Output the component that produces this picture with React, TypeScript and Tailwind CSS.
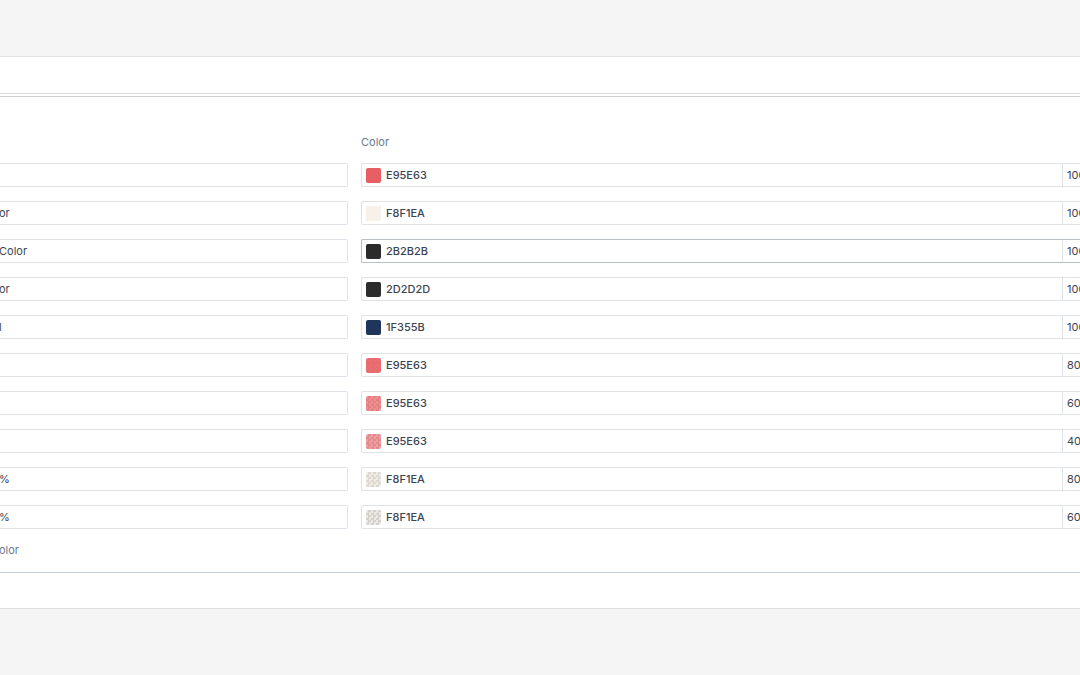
const rows: { label: string; hex: string; swatch: string; op: string; pct: string; focus?: boolean }[] = [
  { label: "", hex: "E95E63", swatch: "bg-[#E95E63]", op: "opacity-100", pct: "100%" },
  { label: "or", hex: "F8F1EA", swatch: "bg-[#F8F1EA]", op: "opacity-100", pct: "100%" },
  { label: "Color", hex: "2B2B2B", swatch: "bg-[#2B2B2B]", op: "opacity-100", pct: "100%", focus: true },
  { label: "or", hex: "2D2D2D", swatch: "bg-[#2D2D2D]", op: "opacity-100", pct: "100%" },
  { label: "l", hex: "1F355B", swatch: "bg-[#1F355B]", op: "opacity-100", pct: "100%" },
  { label: "", hex: "E95E63", swatch: "bg-[#E95E63]", op: "opacity-90", pct: "80%" },
  { label: "", hex: "E95E63", swatch: "bg-[#E95E63]", op: "opacity-70", pct: "60%" },
  { label: "", hex: "E95E63", swatch: "bg-[#E95E63]", op: "opacity-60", pct: "40%" },
  { label: "%", hex: "F8F1EA", swatch: "bg-[#e6ded4]", op: "opacity-60", pct: "80%" },
  { label: "%", hex: "F8F1EA", swatch: "bg-[#d9d2ca]", op: "opacity-50", pct: "60%" },
];

export default function App() {
  return (
    <div className="w-[1080px] h-[675px] overflow-hidden bg-[#f5f5f5] font-[Inter,sans-serif] text-[11px] text-[#3d4451]">
      <div className="h-[56px]" />
      <div className="bg-white border-t border-[#e3e3e3]">
        <div className="h-[37px] border-b border-[#dcdcdc]" />
        <div className="h-[3px] border-b border-[#cfcfcf]" />
        <div className="border-b border-[#c8d0da] pt-[37px] pb-[14px]">
          <div className="flex">
            <div className="w-[361px]" />
            <div className="text-[#6b7a90] leading-[16px]">Color</div>
          </div>
          <div className="mt-[13px] flex flex-col gap-[14px]">
            {rows.map((r, i) => (
              <div key={i} className="flex items-center h-[24px]">
                <div className="w-[348px] h-[24px] border border-[#dfe2e7] border-l-0 rounded-r-[2px] flex items-center">
                  <span className="-ml-[1px]">{r.label}</span>
                </div>
                <div className="w-[13px]" />
                <div className={`flex-1 h-[24px] border ${r.focus ? "border-[#b8bfc8]" : "border-[#dfe2e7]"} border-r-0 rounded-l-[2px] flex items-center`}>
                  <div className="flex-1 flex items-center gap-[5px] pl-[4px]">
                    <div className="relative w-[15px] h-[15px] rounded-[2px] overflow-hidden bg-white bg-[repeating-conic-gradient(#cfcfcf_0_25%,#ffffff_0_50%)] bg-[length:5px_5px]">
                      <div className={`absolute inset-0 ${r.swatch} ${r.op}`} />
                    </div>
                    <span className="font-medium">{r.hex}</span>
                  </div>
                  <div className="w-[18px] h-full border-l border-[#dfe2e7] flex items-center pl-[4px] whitespace-nowrap">
                    {r.pct}
                  </div>
                </div>
              </div>
            ))}
          </div>
          <div className="mt-[13px] text-[#6b7a90] -ml-[1px] leading-[16px]">olor</div>
        </div>
        <div className="h-[36px] border-b border-[#dedede]" />
      </div>
    </div>
  );
}
